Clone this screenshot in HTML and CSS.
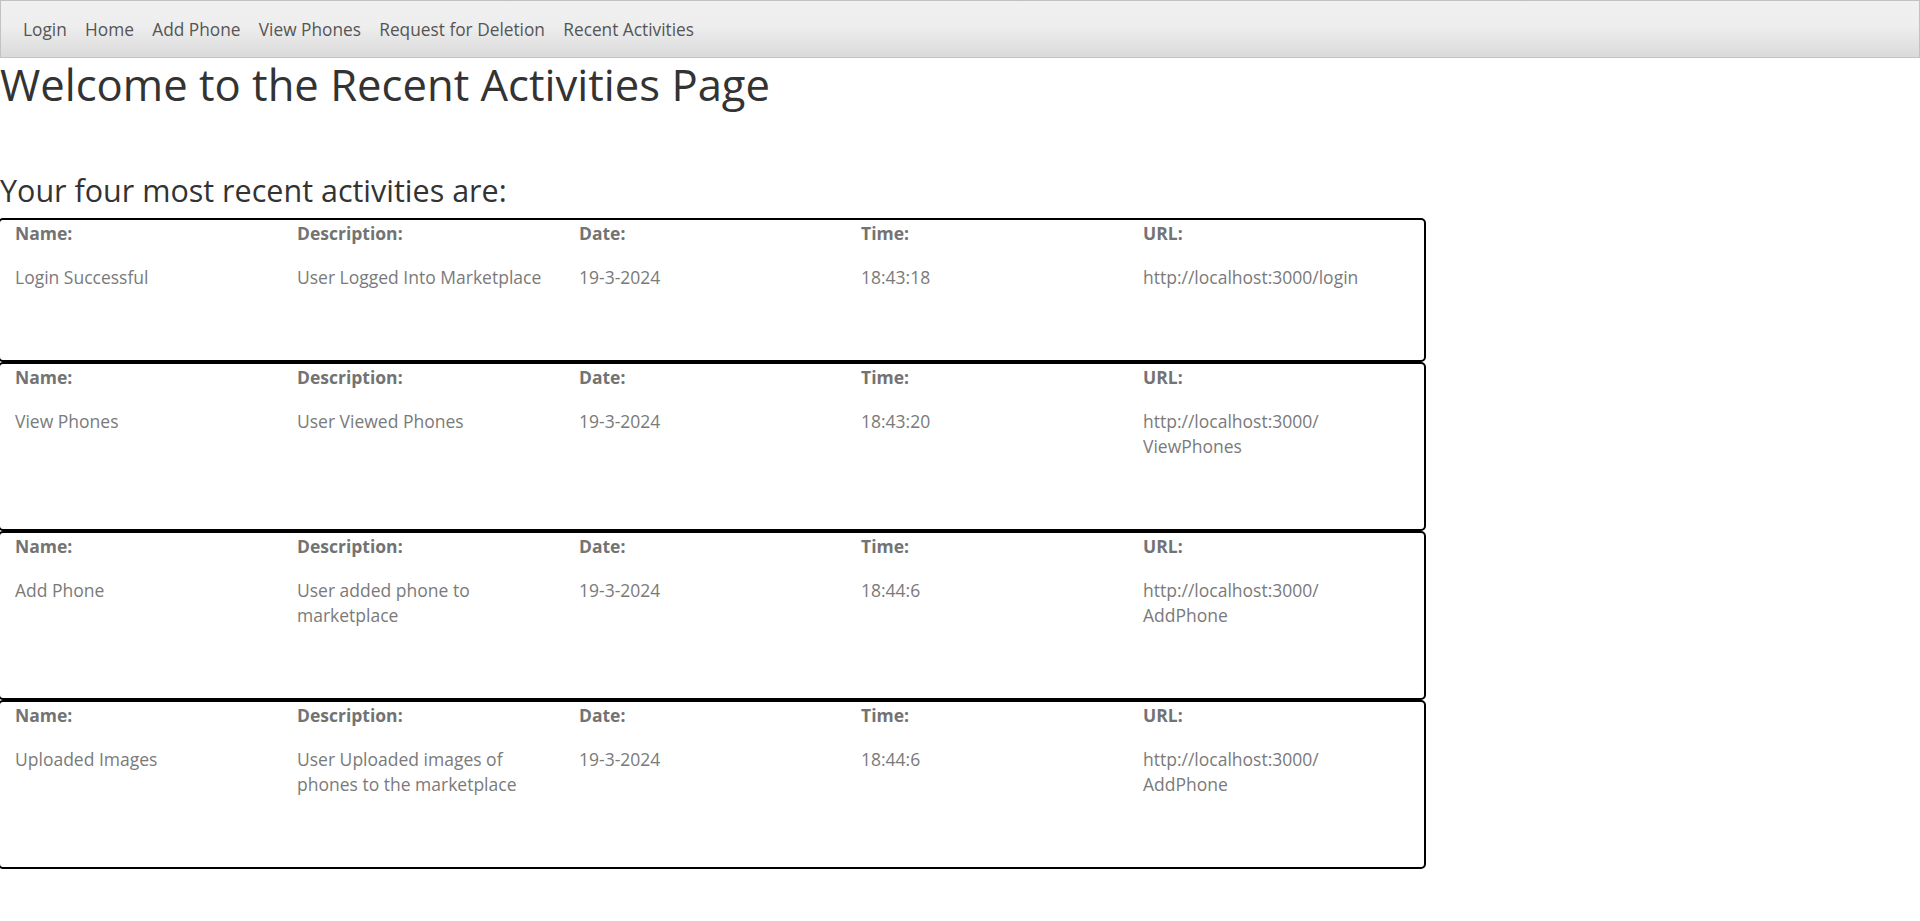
FILE: index.html
```html
<!DOCTYPE html>
<html lang="en">
<head>
<meta charset="utf-8">
<title>Recent Activities</title>
<link rel="stylesheet" href="styles.css">
</head>
<body>
<nav class="navbar">
  <a class="nav-link" href="#">Login</a>
  <a class="nav-link" href="#">Home</a>
  <a class="nav-link" href="#">Add Phone</a>
  <a class="nav-link" href="#">View Phones</a>
  <a class="nav-link" href="#">Request for Deletion</a>
  <a class="nav-link" href="#">Recent Activities</a>
</nav>
<h1 class="page-title">Welcome to the Recent Activities Page</h1>
<h2 class="section-title">Your four most recent activities are:</h2>
<div class="activities">
  <div class="activity">
    <div class="col"><div class="label">Name:</div><div class="value">Login Successful</div></div>
    <div class="col"><div class="label">Description:</div><div class="value">User Logged Into Marketplace</div></div>
    <div class="col"><div class="label">Date:</div><div class="value">19-3-2024</div></div>
    <div class="col"><div class="label">Time:</div><div class="value">18:43:18</div></div>
    <div class="col"><div class="label">URL:</div><div class="value">http://localhost:3000/login</div></div>
  </div>
  <div class="activity">
    <div class="col"><div class="label">Name:</div><div class="value">View Phones</div></div>
    <div class="col"><div class="label">Description:</div><div class="value">User Viewed Phones</div></div>
    <div class="col"><div class="label">Date:</div><div class="value">19-3-2024</div></div>
    <div class="col"><div class="label">Time:</div><div class="value">18:43:20</div></div>
    <div class="col"><div class="label">URL:</div><div class="value">http://localhost:3000/<wbr>ViewPhones</div></div>
  </div>
  <div class="activity">
    <div class="col"><div class="label">Name:</div><div class="value">Add Phone</div></div>
    <div class="col"><div class="label">Description:</div><div class="value">User added phone to marketplace</div></div>
    <div class="col"><div class="label">Date:</div><div class="value">19-3-2024</div></div>
    <div class="col"><div class="label">Time:</div><div class="value">18:44:6</div></div>
    <div class="col"><div class="label">URL:</div><div class="value">http://localhost:3000/<wbr>AddPhone</div></div>
  </div>
  <div class="activity">
    <div class="col"><div class="label">Name:</div><div class="value">Uploaded Images</div></div>
    <div class="col"><div class="label">Description:</div><div class="value">User Uploaded images of phones to the marketplace</div></div>
    <div class="col"><div class="label">Date:</div><div class="value">19-3-2024</div></div>
    <div class="col"><div class="label">Time:</div><div class="value">18:44:6</div></div>
    <div class="col"><div class="label">URL:</div><div class="value">http://localhost:3000/<wbr>AddPhone</div></div>
  </div>
</div>
</body>
</html>
```
FILE: styles.css
```css
html, body {
  margin: 0;
  padding: 0;
  background: #ffffff;
}

body {
  font-family: "Open Sans", "Liberation Sans", sans-serif;
  font-size: 17.5px;
  line-height: 25px;
  color: #333333;
}

.navbar {
  display: flex;
  align-items: center;
  gap: 18.3px;
  height: 56px;
  padding: 0 0 0 22px;
  border: 1px solid #c2c2c2;
  background: linear-gradient(to bottom, #f0f0f0 0%, #eeeeee 45%, #dadada 100%);
}

.nav-link {
  color: #555555;
  text-decoration: none;
  font-size: 17.3px;
  line-height: 25px;
}

.page-title {
  margin: 3px 0 0 0;
  font-size: 43.6px;
  font-weight: 400;
  line-height: 1.1;
  color: #333333;
}

.section-title {
  margin: 65px 0 10px 0;
  font-size: 30.5px;
  font-weight: 400;
  line-height: 1.1;
  color: #333333;
}

.activities {
  display: flex;
  flex-direction: column;
}

.activity {
  display: grid;
  grid-template-columns: repeat(5, 282px);
  width: 1424px;
  margin-left: -2px;
  padding: 1px 0 70px 0;
  border: 2px solid #000000;
  border-radius: 5px;
}

.col {
  padding: 0 15px;
  min-width: 0;
}

.label {
  font-weight: 700;
  color: #737373;
  margin-bottom: 19px;
}

.value {
  color: #7a7a7a;
}
```
